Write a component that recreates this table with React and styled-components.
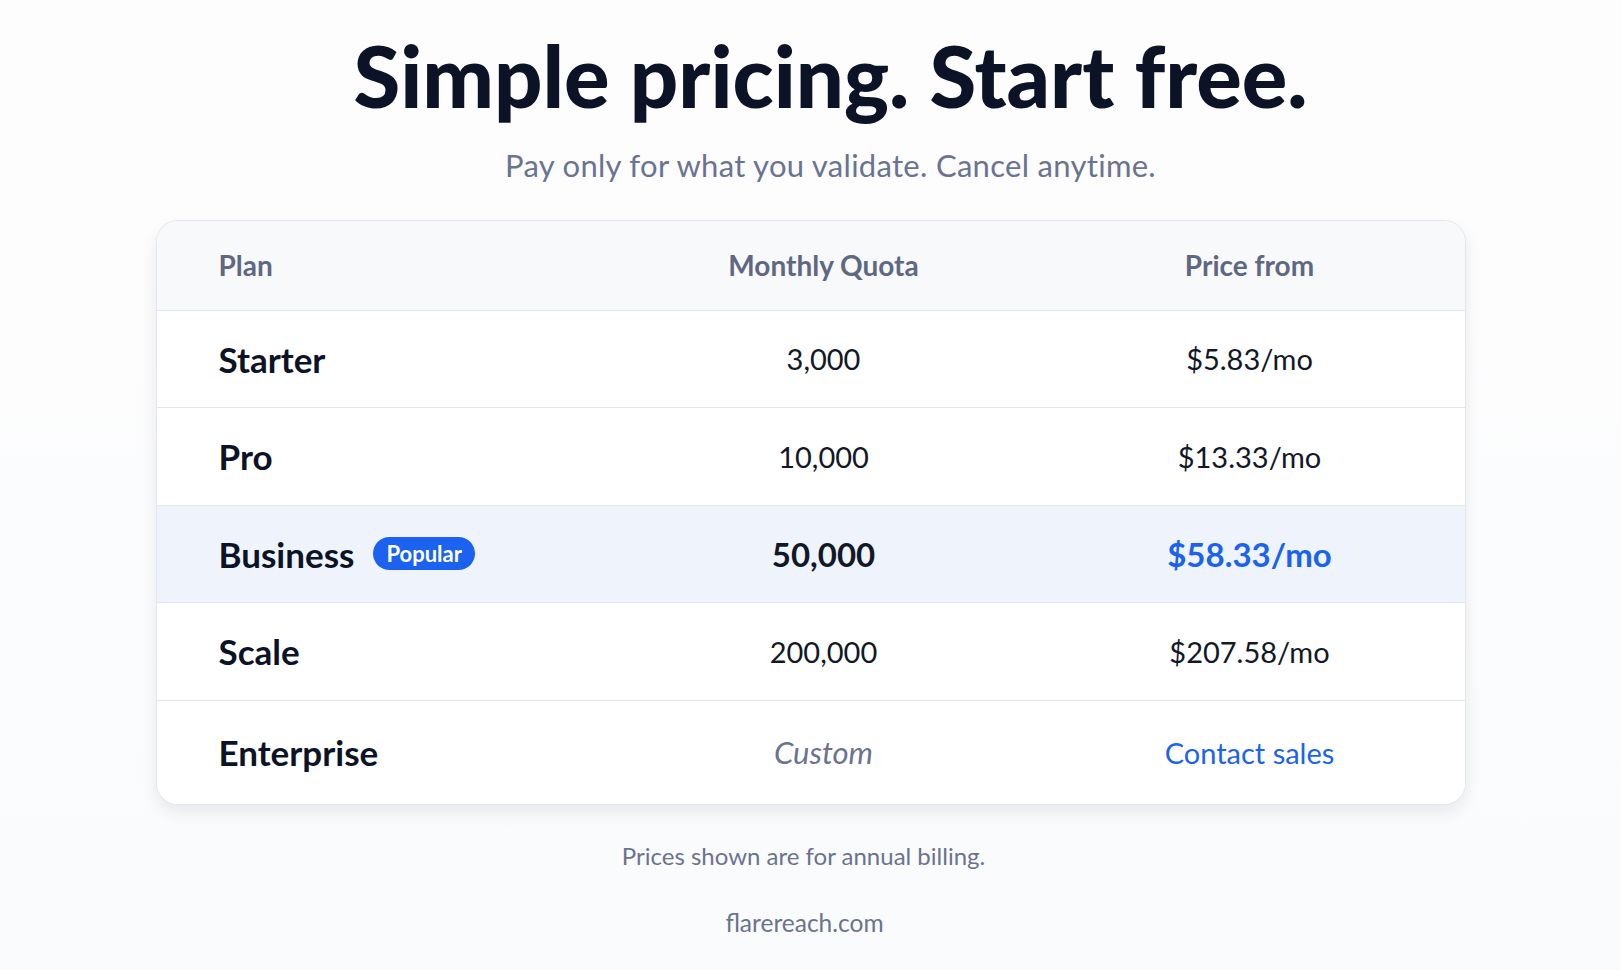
import React from 'react';
import styled, { createGlobalStyle } from 'styled-components';

const GlobalStyle = createGlobalStyle`
  html, body {
    margin: 0;
    padding: 0;
    background: #fcfcfd;
  }
  body {
    font-family: Lato, 'Open Sans', sans-serif;
    color: #0e1528;
  }
`;

const Page = styled.div`
  min-height: 970px;
  display: flex;
  flex-direction: column;
  align-items: center;
  padding-top: 29px;
  box-sizing: border-box;
  background: linear-gradient(180deg, #fdfdfe 0%, #fafbfc 100%);
`;

const Title = styled.h1`
  margin: 0;
  font-size: 85px;
  font-weight: 900;
  line-height: 1.1;
  color: #0c1326;
  padding-left: 40px;
`;

const Subtitle = styled.p`
  margin: 24px 0 0;
  font-size: 31px;
  line-height: 1.2;
  letter-spacing: 0.3px;
  color: #6a7390;
  padding-left: 40px;
`;

const Table = styled.div`
  margin-top: 36px;
  width: 1308px;
  border: 1.5px solid #e3e6ec;
  border-radius: 22px;
  overflow: hidden;
  background: #fff;
  box-shadow: 0 8px 16px rgba(20, 30, 60, 0.08);
`;

const Row = styled.div`
  display: grid;
  grid-template-columns: 456px 422px 1fr;
  align-items: center;
  height: ${({ $head, $last }) => ($head ? '89px' : $last ? '103px' : '96.5px')};
  background: ${({ $head, $hl }) => ($head ? '#f8f9fb' : $hl ? '#eef3fc' : '#fff')};
  border-top: ${({ $first }) => ($first ? 'none' : '1.5px solid #e2e5eb')};
`;

const Cell = styled.div`
  padding-left: ${({ $left }) => ($left ? '62px' : '0')};
  display: flex;
  align-items: center;
  justify-content: ${({ $left }) => ($left ? 'flex-start' : 'center')};
  gap: 19px;
`;

const HeadText = styled.span`
  font-size: 28px;
  font-weight: 700;
  color: #5f6882;
`;

const PlanName = styled.span`
  font-size: 35px;
  font-weight: 700;
  color: #0c1326;
`;

const Value = styled.span`
  font-size: ${({ $bold, $muted }) => ($bold ? '33px' : $muted ? '31px' : '29px')};
  font-weight: ${({ $bold }) => ($bold ? 700 : 400)};
  font-style: ${({ $muted }) => ($muted ? 'italic' : 'normal')};
  color: ${({ $blue, $muted }) => ($blue ? '#1b63ee' : $muted ? '#6a7390' : '#111827')};
`;

const Badge = styled.span`
  display: inline-flex;
  align-items: center;
  height: 33px;
  padding: 0 13px;
  border-radius: 17px;
  background: #1a62ef;
  color: #fff;
  font-size: 22px;
  font-weight: 700;
`;

const Note = styled.p`
  margin: 37px 0 0;
  padding-right: 14px;
  font-size: 24px;
  line-height: 1.2;
  color: #6a7390;
`;

const Domain = styled.p`
  margin: 38px 0 0;
  padding-right: 12px;
  font-size: 24.5px;
  line-height: 1.2;
  color: #6a7390;
`;

const plans = [
  { name: 'Starter', quota: '3,000', price: '$5.83/mo' },
  { name: 'Pro', quota: '10,000', price: '$13.33/mo' },
  { name: 'Business', quota: '50,000', price: '$58.33/mo', popular: true },
  { name: 'Scale', quota: '200,000', price: '$207.58/mo' },
  { name: 'Enterprise', quota: 'Custom', price: 'Contact sales', custom: true },
];

export default function App() {
  return (
    <Page>
      <GlobalStyle />
      <Title>Simple pricing. Start free.</Title>
      <Subtitle>Pay only for what you validate. Cancel anytime.</Subtitle>
      <Table>
        <Row $head $first>
          <Cell $left><HeadText>Plan</HeadText></Cell>
          <Cell><HeadText>Monthly Quota</HeadText></Cell>
          <Cell><HeadText>Price from</HeadText></Cell>
        </Row>
        {plans.map((p, i) => (
          <Row key={p.name} $hl={p.popular} $last={i === plans.length - 1}>
            <Cell $left>
              <PlanName>{p.name}</PlanName>
              {p.popular && <Badge>Popular</Badge>}
            </Cell>
            <Cell>
              <Value $bold={p.popular} $muted={p.custom}>{p.quota}</Value>
            </Cell>
            <Cell>
              <Value $bold={p.popular} $blue={p.popular || p.custom}>{p.price}</Value>
            </Cell>
          </Row>
        ))}
      </Table>
      <Note>Prices shown are for annual billing.</Note>
      <Domain>flarereach.com</Domain>
    </Page>
  );
}
